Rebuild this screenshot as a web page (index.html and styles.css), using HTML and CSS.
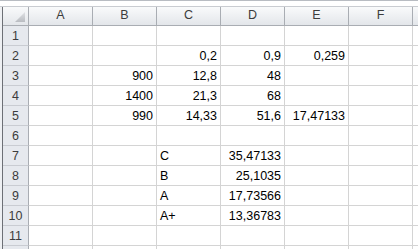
FILE: index.html
```html
<!DOCTYPE html>
<html lang="en">

<head>
    <meta charset="UTF-8">
    <title>Sheet1</title>
    <link rel="stylesheet" href="styles.css">
</head>

<body>
    <div class="window">
        <div class="topbar"></div>
        <div class="sheet">
            <!-- column headers -->
            <div class="corner"><span class="tri"></span></div>
            <div class="colhead">A</div>
            <div class="colhead">B</div>
            <div class="colhead">C</div>
            <div class="colhead">D</div>
            <div class="colhead">E</div>
            <div class="colhead">F</div>
            <div class="colhead"></div>

            <div class="rowhead">1</div>
            <div class="cell"></div><div class="cell"></div><div class="cell"></div><div class="cell"></div><div class="cell"></div><div class="cell"></div><div class="cell"></div>

            <div class="rowhead">2</div>
            <div class="cell"></div><div class="cell"></div><div class="cell num">0,2</div><div class="cell num">0,9</div><div class="cell num">0,259</div><div class="cell"></div><div class="cell"></div>

            <div class="rowhead">3</div>
            <div class="cell"></div><div class="cell num">900</div><div class="cell num">12,8</div><div class="cell num">48</div><div class="cell"></div><div class="cell"></div><div class="cell"></div>

            <div class="rowhead">4</div>
            <div class="cell"></div><div class="cell num">1400</div><div class="cell num">21,3</div><div class="cell num">68</div><div class="cell"></div><div class="cell"></div><div class="cell"></div>

            <div class="rowhead">5</div>
            <div class="cell"></div><div class="cell num">990</div><div class="cell num">14,33</div><div class="cell num">51,6</div><div class="cell num">17,47133</div><div class="cell"></div><div class="cell"></div>

            <div class="rowhead">6</div>
            <div class="cell"></div><div class="cell"></div><div class="cell"></div><div class="cell"></div><div class="cell"></div><div class="cell"></div><div class="cell"></div>

            <div class="rowhead">7</div>
            <div class="cell"></div><div class="cell"></div><div class="cell">C</div><div class="cell num">35,47133</div><div class="cell"></div><div class="cell"></div><div class="cell"></div>

            <div class="rowhead">8</div>
            <div class="cell"></div><div class="cell"></div><div class="cell">B</div><div class="cell num">25,1035</div><div class="cell"></div><div class="cell"></div><div class="cell"></div>

            <div class="rowhead">9</div>
            <div class="cell"></div><div class="cell"></div><div class="cell">A</div><div class="cell num">17,73566</div><div class="cell"></div><div class="cell"></div><div class="cell"></div>

            <div class="rowhead">10</div>
            <div class="cell"></div><div class="cell"></div><div class="cell">A+</div><div class="cell num">13,36783</div><div class="cell"></div><div class="cell"></div><div class="cell"></div>

            <div class="rowhead">11</div>
            <div class="cell"></div><div class="cell"></div><div class="cell"></div><div class="cell"></div><div class="cell"></div><div class="cell"></div><div class="cell"></div>

            <!-- partly visible row 12 -->
            <div class="rowhead"></div>
            <div class="cell"></div><div class="cell"></div><div class="cell"></div><div class="cell"></div><div class="cell"></div><div class="cell"></div><div class="cell"></div>
        </div>
    </div>
</body>

</html>
```
FILE: styles.css
```css
html, body {
    margin: 0;
    height: 100%;
    overflow: hidden;
    background-color: white;
}

.window {
    height: 249px;
    overflow: hidden;
    padding-left: 2px;
    background-color: #eef0f3;
    font-family: "Liberation Sans", Arial, sans-serif;
    font-size: 12.5px;
}

.topbar {
    height: 5px;
    border-top: 1px solid #b8bcc2;
    border-bottom: 1px solid #c9ccd1;
    background-color: #ffffff;
    margin-left: -2px;
}

.sheet {
    display: grid;
    grid-template-columns: 26px repeat(6, 64px) 1fr;
    grid-template-rows: 19px;
    grid-auto-rows: 20px;
    border-left: 1px solid #6d7076;
    background-color: white;
}

.sheet > div {
    box-sizing: border-box;
    border-right: 1px solid #d4d4d4;
    border-bottom: 1px solid #d4d4d4;
    overflow: hidden;
    white-space: nowrap;
}

.corner,
.colhead {
    background: linear-gradient(#f9fafb, #e3e6ea);
    border-color: #a9adb3 !important;
    color: #3c3c3c;
    text-align: center;
    line-height: 17px;
}

.corner {
    display: flex;
    justify-content: flex-end;
    align-items: flex-end;
    padding: 0 3px 3px 0;
}

.tri {
    width: 10px;
    height: 10px;
    background: linear-gradient(#e0e2e5, #b9bcc1);
    clip-path: polygon(100% 0, 100% 100%, 0 100%);
}

.rowhead {
    background-color: #e6e9ee;
    border-right-color: #a9adb3 !important;
    border-bottom-color: #c9ccd2 !important;
    color: #3c3c3c;
    text-align: center;
    line-height: 21px;
}

.cell {
    color: #000;
    padding: 0 3px;
    line-height: 21px;
}

.num {
    text-align: right;
}
```
